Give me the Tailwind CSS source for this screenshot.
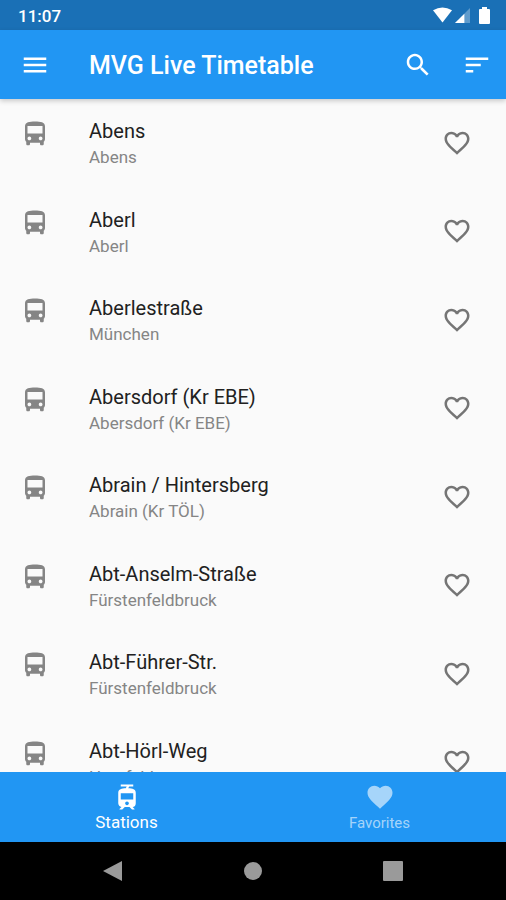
<!DOCTYPE html>
<html lang="en">
<head>
<meta charset="utf-8">
<meta name="viewport" content="width=device-width, initial-scale=1">
<title>MVG Live Timetable</title>
<script src="https://cdn.jsdelivr.net/npm/@tailwindcss/browser@4"></script>
</head>
<body class="flex h-screen flex-col overflow-hidden bg-[#fafafa] font-[Roboto,sans-serif] text-[#212121]">
<svg class="hidden" aria-hidden="true">
  <symbol id="bus" viewBox="0 0 24 24"><path d="M4 16c0 .88.39 1.67 1 2.22V20c0 .55.45 1 1 1h1c.55 0 1-.45 1-1v-1h8v1c0 .55.45 1 1 1h1c.55 0 1-.45 1-1v-1.78c.61-.55 1-1.34 1-2.22V6c0-3.500-3.580-4-8-4s-8 .5-8 4v10zm3.500 1c-.83 0-1.500-.67-1.500-1.500S6.670 14 7.500 14s1.500.67 1.500 1.500S8.330 17 7.500 17zm9 0c-.83 0-1.500-.67-1.500-1.500s.67-1.500 1.500-1.500 1.500.67 1.500 1.500-.67 1.500-1.500 1.500zm1.500-5.500H6V5.500h12v6z"/></symbol>
  <symbol id="heart-outline" viewBox="0 0 24 24"><path d="M16.500 3c-1.740 0-3.410.81-4.500 2.090C10.910 3.810 9.240 3 7.500 3 4.420 3 2 5.420 2 8.500c0 3.780 3.400 6.860 8.550 11.540L12 21.350l1.450-1.320C18.600 15.360 22 12.280 22 8.500 22 5.420 19.580 3 16.500 3zm-4.400 15.550l-.1.100-.1-.1C7.140 14.240 4 11.390 4 8.500 4 6.500 5.500 5 7.500 5c1.540 0 3.040.99 3.570 2.360h1.870C13.460 5.990 14.960 5 16.500 5c2 0 3.500 1.500 3.500 3.500 0 2.890-3.140 5.740-7.900 10.050z"/></symbol>
</svg>

<div class="flex h-[30px] shrink-0 items-center justify-between bg-[#1a70b6] pr-4 pl-[18px] text-white">
  <span class="pt-[2px] text-[17px] leading-5 font-medium">11:07</span>
  <div class="flex items-center gap-[3px]">
    <svg class="h-4 w-[19px]" viewBox="0 0 20 16" fill="currentColor" role="img" aria-label="Wi-Fi"><path d="M0 3Q10-3 20 3L10 16z"/></svg>
    <svg class="h-[15px] w-[15px]" viewBox="0 0 16 16" fill="currentColor" role="img" aria-label="Signal"><path d="M0 16L16 0v16z" opacity=".3"/><path d="M0 16L10 6v10z"/></svg>
    <svg class="ml-[6px] h-[17px] w-[11px]" viewBox="0 0 11 17" fill="currentColor" role="img" aria-label="Battery"><path d="M3 0h5v2h2a1 1 0 0 1 1 1v13a1 1 0 0 1-1 1H1a1 1 0 0 1-1-1V3a1 1 0 0 1 1-1h2z"/></svg>
  </div>
</div>

<header class="relative z-10 flex h-[69px] shrink-0 items-center bg-[#2196f3] text-white shadow-[0_2px_5px_rgba(0,0,0,0.2)]">
  <button type="button" class="flex h-full w-[70px] items-center justify-center" aria-label="Menu">
    <svg class="size-[30px]" viewBox="0 0 24 24" fill="currentColor"><path d="M3 18h18v-2H3v2zm0-5h18v-2H3v2zm0-7v2h18V6H3z"/></svg>
  </button>
  <h1 class="ml-[19px] flex-1 pt-[2px] text-[25px] leading-8 font-medium whitespace-nowrap">MVG Live Timetable</h1>
  <button type="button" class="flex h-full w-[59px] items-center justify-center" aria-label="Search">
    <svg class="size-[30px]" viewBox="0 0 24 24" fill="currentColor"><path d="M15.500 14h-.79l-.28-.27C15.410 12.590 16 11.110 16 9.500 16 5.910 13.090 3 9.500 3S3 5.910 3 9.500 5.910 16 9.500 16c1.610 0 3.090-.59 4.230-1.570l.27.28v.79l5 4.990L20.490 19l-4.990-5zm-6 0C7.010 14 5 11.990 5 9.500S7.010 5 9.500 5 14 7.010 14 9.500 11.990 14 9.500 14z"/></svg>
  </button>
  <button type="button" class="flex h-full w-[59px] items-center justify-center" aria-label="Sort">
    <svg class="size-[30px]" viewBox="0 0 24 24" fill="currentColor"><path d="M3 18h6v-2H3v2zM3 6v2h18V6H3zm0 7h12v-2H3v2z"/></svg>
  </button>
</header>

<main class="min-h-0 flex-1 overflow-hidden">
  <ul>
    <li class="flex items-start pr-5 pl-5 odd:h-[89px] even:h-[88px]">
      <svg class="mt-5 size-[30px] shrink-0 text-[#858585]" fill="currentColor" aria-hidden="true"><use href="#bus"/></svg>
      <div class="mt-[19px] ml-[39px] flex-1"><h2 class="text-[20px] leading-[26px]">Abens</h2><p class="text-[17px] leading-[26px] text-[#858585]">Abens</p></div>
      <button type="button" class="flex h-full w-[58px] items-center justify-center pb-[2px] text-[#757575]" aria-label="Add Abens to favorites"><svg class="size-[30px]" fill="currentColor"><use href="#heart-outline"/></svg></button>
    </li>
    <li class="flex items-start pr-5 pl-5 odd:h-[89px] even:h-[88px]">
      <svg class="mt-5 size-[30px] shrink-0 text-[#858585]" fill="currentColor" aria-hidden="true"><use href="#bus"/></svg>
      <div class="mt-[19px] ml-[39px] flex-1"><h2 class="text-[20px] leading-[26px]">Aberl</h2><p class="text-[17px] leading-[26px] text-[#858585]">Aberl</p></div>
      <button type="button" class="flex h-full w-[58px] items-center justify-center pb-[2px] text-[#757575]" aria-label="Add Aberl to favorites"><svg class="size-[30px]" fill="currentColor"><use href="#heart-outline"/></svg></button>
    </li>
    <li class="flex items-start pr-5 pl-5 odd:h-[89px] even:h-[88px]">
      <svg class="mt-5 size-[30px] shrink-0 text-[#858585]" fill="currentColor" aria-hidden="true"><use href="#bus"/></svg>
      <div class="mt-[19px] ml-[39px] flex-1"><h2 class="text-[20px] leading-[26px]">Aberlestraße</h2><p class="text-[17px] leading-[26px] text-[#858585]">München</p></div>
      <button type="button" class="flex h-full w-[58px] items-center justify-center pb-[2px] text-[#757575]" aria-label="Add Aberlestraße to favorites"><svg class="size-[30px]" fill="currentColor"><use href="#heart-outline"/></svg></button>
    </li>
    <li class="flex items-start pr-5 pl-5 odd:h-[89px] even:h-[88px]">
      <svg class="mt-5 size-[30px] shrink-0 text-[#858585]" fill="currentColor" aria-hidden="true"><use href="#bus"/></svg>
      <div class="mt-[19px] ml-[39px] flex-1"><h2 class="text-[20px] leading-[26px]">Abersdorf (Kr EBE)</h2><p class="text-[17px] leading-[26px] text-[#858585]">Abersdorf (Kr EBE)</p></div>
      <button type="button" class="flex h-full w-[58px] items-center justify-center pb-[2px] text-[#757575]" aria-label="Add Abersdorf to favorites"><svg class="size-[30px]" fill="currentColor"><use href="#heart-outline"/></svg></button>
    </li>
    <li class="flex items-start pr-5 pl-5 odd:h-[89px] even:h-[88px]">
      <svg class="mt-5 size-[30px] shrink-0 text-[#858585]" fill="currentColor" aria-hidden="true"><use href="#bus"/></svg>
      <div class="mt-[19px] ml-[39px] flex-1"><h2 class="text-[20px] leading-[26px]">Abrain / Hintersberg</h2><p class="text-[17px] leading-[26px] text-[#858585]">Abrain (Kr TÖL)</p></div>
      <button type="button" class="flex h-full w-[58px] items-center justify-center pb-[2px] text-[#757575]" aria-label="Add Abrain / Hintersberg to favorites"><svg class="size-[30px]" fill="currentColor"><use href="#heart-outline"/></svg></button>
    </li>
    <li class="flex items-start pr-5 pl-5 odd:h-[89px] even:h-[88px]">
      <svg class="mt-5 size-[30px] shrink-0 text-[#858585]" fill="currentColor" aria-hidden="true"><use href="#bus"/></svg>
      <div class="mt-[19px] ml-[39px] flex-1"><h2 class="text-[20px] leading-[26px]">Abt-Anselm-Straße</h2><p class="text-[17px] leading-[26px] text-[#858585]">Fürstenfeldbruck</p></div>
      <button type="button" class="flex h-full w-[58px] items-center justify-center pb-[2px] text-[#757575]" aria-label="Add Abt-Anselm-Straße to favorites"><svg class="size-[30px]" fill="currentColor"><use href="#heart-outline"/></svg></button>
    </li>
    <li class="flex items-start pr-5 pl-5 odd:h-[89px] even:h-[88px]">
      <svg class="mt-5 size-[30px] shrink-0 text-[#858585]" fill="currentColor" aria-hidden="true"><use href="#bus"/></svg>
      <div class="mt-[19px] ml-[39px] flex-1"><h2 class="text-[20px] leading-[26px]">Abt-Führer-Str.</h2><p class="text-[17px] leading-[26px] text-[#858585]">Fürstenfeldbruck</p></div>
      <button type="button" class="flex h-full w-[58px] items-center justify-center pb-[2px] text-[#757575]" aria-label="Add Abt-Führer-Str. to favorites"><svg class="size-[30px]" fill="currentColor"><use href="#heart-outline"/></svg></button>
    </li>
    <li class="flex items-start pr-5 pl-5 odd:h-[89px] even:h-[88px]">
      <svg class="mt-5 size-[30px] shrink-0 text-[#858585]" fill="currentColor" aria-hidden="true"><use href="#bus"/></svg>
      <div class="mt-[19px] ml-[39px] flex-1"><h2 class="text-[20px] leading-[26px]">Abt-Hörl-Weg</h2><p class="text-[17px] leading-[26px] text-[#858585]">Haarfeld</p></div>
      <button type="button" class="flex h-full w-[58px] items-center justify-center pb-[2px] text-[#757575]" aria-label="Add Abt-Hörl-Weg to favorites"><svg class="size-[30px]" fill="currentColor"><use href="#heart-outline"/></svg></button>
    </li>
  </ul>
</main>

<nav class="flex h-[70px] shrink-0 bg-[#2196f3] text-white" aria-label="Sections">
  <a href="#stations" class="flex flex-1 flex-col items-center pt-[10px]" aria-current="page">
    <svg class="size-[30px]" viewBox="0 0 24 24" fill="currentColor" aria-hidden="true"><path d="M19 16.940V8.500c0-2.790-2.610-3.400-6.010-3.490l.76-1.510H17V2H7v1.500h4.750l-.76 1.520C7.860 5.110 5 5.730 5 8.500v8.440c0 1.450 1.190 2.660 2.590 2.970L6 21.500v.5h2.230l2-2H14l2 2h2v-.5L16.500 20h-.08c1.690 0 2.580-1.370 2.580-3.060zm-7 1.560c-.83 0-1.500-.67-1.500-1.500s.67-1.500 1.500-1.500 1.500.67 1.500 1.500-.67 1.500-1.500 1.500zm5-4.500H7V9h10v5z"/></svg>
    <span class="text-[17px] leading-5">Stations</span>
  </a>
  <a href="#favorites" class="flex flex-1 flex-col items-center pt-[10px] text-white/60">
    <svg class="size-[30px]" viewBox="0 0 24 24" fill="currentColor" aria-hidden="true"><path d="M12 21.350l-1.450-1.320C5.400 15.360 2 12.280 2 8.500 2 5.420 4.420 3 7.500 3c1.740 0 3.410.81 4.500 2.090C13.090 3.810 14.760 3 16.500 3 19.580 3 22 5.420 22 8.500c0 3.780-3.400 6.860-8.550 11.540L12 21.350z"/></svg>
    <span class="pt-px text-[15px] leading-5">Favorites</span>
  </a>
</nav>

<div class="flex h-[58px] shrink-0 items-center justify-center gap-[110px] bg-black text-[#9a9a9a]">
  <button type="button" class="size-[30px]" aria-label="Back"><svg class="size-full" viewBox="0 0 30 30" fill="currentColor"><path d="M5 15L24 5v20z"/></svg></button>
  <button type="button" class="size-[30px]" aria-label="Home"><svg class="size-full" viewBox="0 0 30 30" fill="currentColor"><circle cx="15" cy="15" r="9"/></svg></button>
  <button type="button" class="size-[30px]" aria-label="Overview"><svg class="size-full" viewBox="0 0 30 30" fill="currentColor"><rect x="5" y="5" width="20" height="20" rx="1"/></svg></button>
</div>
</body>
</html>
